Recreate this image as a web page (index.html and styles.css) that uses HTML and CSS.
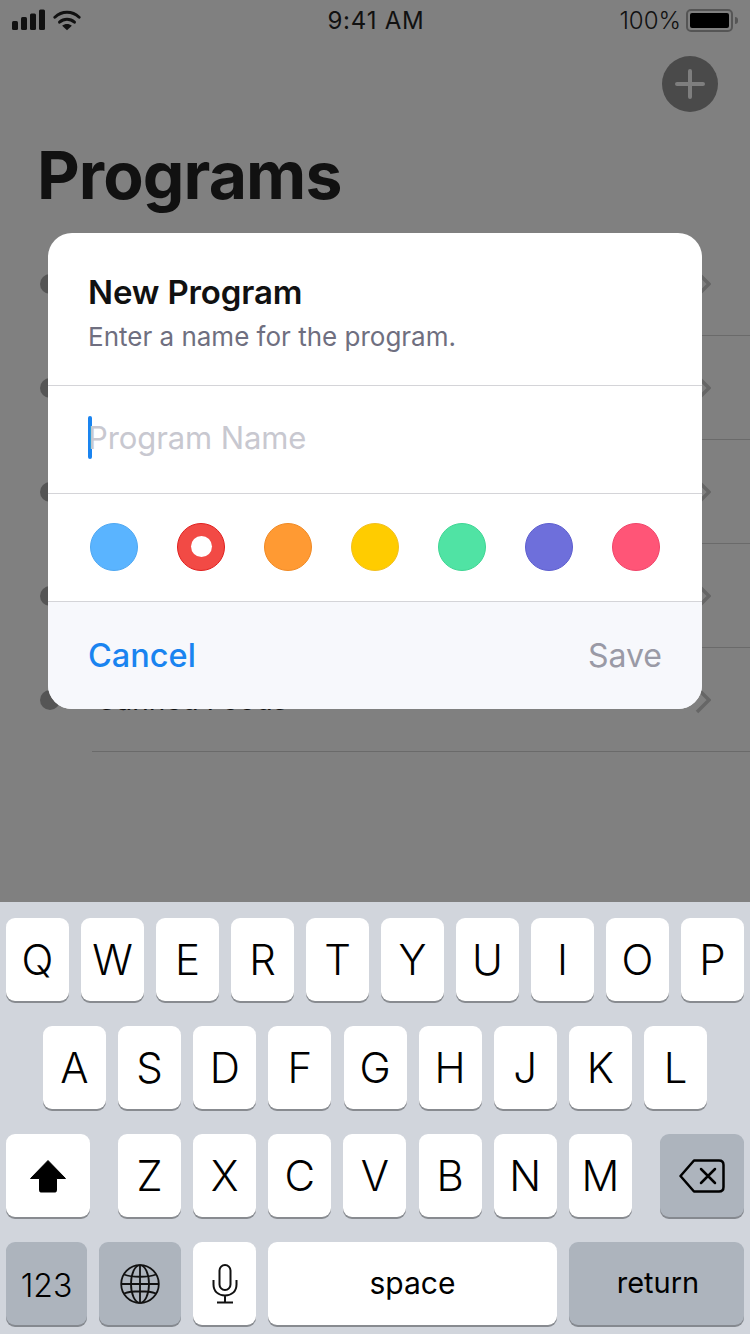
FILE: index.html
```html
<!DOCTYPE html>
<html lang="en">
<head>
<meta charset="utf-8">
<title>Programs</title>
<link rel="stylesheet" href="styles.css">
</head>
<body>
<div class="phone">
  <div class="status">
    <div class="status-left">
      <svg class="signal" width="34" height="22" viewBox="0 0 34 22"><rect x="0" y="12" width="6" height="9" rx="1.5"/><rect x="9" y="8" width="6" height="13" rx="1.5"/><rect x="18" y="4.500" width="6" height="16.500" rx="1.500"/><rect x="27" y="0.500" width="6" height="20.500" rx="1.500"/></svg>
      <svg class="wifi" width="28" height="21" viewBox="0 0 30 22"><path d="M2 7.500C9.500 .5 20.500 .5 28 7.500" fill="none" stroke="#111" stroke-width="3.200" stroke-linecap="round"/><path d="M7 12.800C11.700 8.600 18.300 8.600 23 12.800" fill="none" stroke="#111" stroke-width="3.200" stroke-linecap="round"/><path d="M15 21.500L9.800 16.600C12.800 14.200 17.200 14.200 20.200 16.600Z" fill="#111"/></svg>
    </div>
    <div class="status-time">9:41 AM</div>
    <div class="status-right">
      <span class="pct">100%</span>
      <span class="battery"><span class="battery-fill"></span></span>
      <span class="battery-nub"></span>
    </div>
  </div>
  <div class="topbar">
    <div class="add">
      <svg width="30" height="30" viewBox="0 0 30 30"><path d="M15 2V28M2 15H28" stroke="#7e7e7e" stroke-width="4" stroke-linecap="round"/></svg>
    </div>
  </div>
  <h1 class="title">Programs</h1>
  <div class="list">
    <div class="row"><span class="dot"></span><div class="row-body"><svg class="chev" width="16" height="28" viewBox="0 0 16 28"><path d="M2 2L14 14L2 26" fill="none" stroke="#666" stroke-width="3.500"/></svg></div></div>
    <div class="row"><span class="dot"></span><div class="row-body"><svg class="chev" width="16" height="28" viewBox="0 0 16 28"><path d="M2 2L14 14L2 26" fill="none" stroke="#666" stroke-width="3.500"/></svg></div></div>
    <div class="row"><span class="dot"></span><div class="row-body"><svg class="chev" width="16" height="28" viewBox="0 0 16 28"><path d="M2 2L14 14L2 26" fill="none" stroke="#666" stroke-width="3.500"/></svg></div></div>
    <div class="row"><span class="dot"></span><div class="row-body"><svg class="chev" width="16" height="28" viewBox="0 0 16 28"><path d="M2 2L14 14L2 26" fill="none" stroke="#666" stroke-width="3.500"/></svg></div></div>
    <div class="row"><span class="dot"></span><div class="row-body"><span class="row-label">Canned Foods</span><svg class="chev" width="16" height="28" viewBox="0 0 16 28"><path d="M2 2L14 14L2 26" fill="none" stroke="#666" stroke-width="3.500"/></svg></div></div>
  </div>

  <div class="keyboard">
    <div class="kb-row">
      <div class="key">Q</div><div class="key">W</div><div class="key">E</div><div class="key">R</div><div class="key">T</div><div class="key">Y</div><div class="key">U</div><div class="key">I</div><div class="key">O</div><div class="key">P</div>
    </div>
    <div class="kb-row kb-row-2">
      <div class="key">A</div><div class="key">S</div><div class="key">D</div><div class="key">F</div><div class="key">G</div><div class="key">H</div><div class="key">J</div><div class="key">K</div><div class="key">L</div>
    </div>
    <div class="kb-row kb-row-3">
      <div class="key key-shift">
        <svg width="38" height="34" viewBox="0 0 38 34"><path d="M19 1.500L36.500 19.500H27.500V31.500C27.500 32.600 26.800 33 26 33H12C11.200 33 10.500 32.600 10.500 31.500V19.500H1.500Z" fill="#000" stroke="#000" stroke-linejoin="round"/></svg>
      </div>
      <div class="letters">
        <div class="key">Z</div><div class="key">X</div><div class="key">C</div><div class="key">V</div><div class="key">B</div><div class="key">N</div><div class="key">M</div>
      </div>
      <div class="key key-delete key-dark">
        <svg width="46" height="34" viewBox="0 0 46 34"><path d="M15 1.500H40C42.800 1.500 44.500 3.200 44.500 6V28C44.500 30.800 42.800 32.500 40 32.500H15L1.500 17Z" fill="none" stroke="#000" stroke-width="2.500" stroke-linejoin="round"/><path d="M22 10L36 24M36 10L22 24" stroke="#000" stroke-width="2.500" stroke-linecap="round"/></svg>
      </div>
    </div>
    <div class="kb-row">
      <div class="key key-dark key-123">123</div>
      <div class="key key-dark key-globe">
        <svg width="40" height="40" viewBox="0 0 40 40" fill="none" stroke="#111" stroke-width="1.800"><circle cx="20" cy="20" r="18.800"/><ellipse cx="20" cy="20" rx="9" ry="18.800"/><path d="M20 1.200V38.800M1.200 20H38.800M4 10.500C12 13.500 28 13.500 36 10.500M4 29.500C12 26.500 28 26.500 36 29.500"/></svg>
      </div>
      <div class="key">
        <svg width="26" height="40" viewBox="0 0 26 40" fill="none" stroke="#111" stroke-width="2"><rect x="7.500" y="1" width="11" height="25" rx="5.500"/><path d="M1.500 16V20.500C1.500 27.500 6.500 31.500 13 31.500C19.500 31.500 24.500 27.500 24.500 20.500V16M13 31.500V38.500M5 38.500H21"/></svg>
      </div>
      <div class="key key-space">space</div>
      <div class="key key-dark key-return">return</div>
    </div>
  </div>

  <div class="modal">
    <div class="modal-head">
      <div class="modal-title">New Program</div>
      <div class="modal-sub">Enter a name for the program.</div>
    </div>
    <div class="modal-input">
      <span class="caret"></span>
      <span class="placeholder">Program Name</span>
    </div>
    <div class="colors">
      <span class="swatch swatch-blue"></span>
      <span class="swatch swatch-red"><span class="swatch-hole"></span></span>
      <span class="swatch swatch-orange"></span>
      <span class="swatch swatch-yellow"></span>
      <span class="swatch swatch-green"></span>
      <span class="swatch swatch-purple"></span>
      <span class="swatch swatch-pink"></span>
    </div>
    <div class="modal-foot">
      <span class="cancel">Cancel</span>
      <span class="save">Save</span>
    </div>
  </div>
</div>
</body>
</html>
```

FILE: styles.css
```css
* { box-sizing: border-box; }
html, body { margin: 0; padding: 0; }
body { width: 750px; height: 1334px; overflow: hidden; font-family: Inter, "Liberation Sans", sans-serif; }

.phone { position: relative; width: 750px; height: 1334px; background: #808080; display: flex; flex-direction: column; color: #111; }

.status { height: 40px; display: flex; align-items: center; justify-content: space-between; padding: 0 12px; flex: none; }
.status-left { flex: 1; display: flex; align-items: center; gap: 7px; }
.signal { fill: #111; }
.status-time { font-size: 24px; letter-spacing: 0.8px; line-height: 40px; color: #111; padding: 1px 0 0 2px; }
.status-right { flex: 1; display: flex; align-items: center; justify-content: flex-end; }
.pct { font-size: 24px; font-weight: 300; margin-right: 5px; line-height: 40px; padding-top: 1px; }
.battery { width: 47px; height: 23px; border: 2px solid #555; border-radius: 5px; padding: 2px; display: block; }
.battery-fill { display: block; width: 100%; height: 100%; background: #000; border-radius: 2px; }
.battery-nub { width: 3px; height: 7px; margin-left: 2px; background: #555; border-radius: 0 3px 3px 0; }

.topbar { height: 72px; flex: none; display: flex; justify-content: flex-end; align-items: flex-start; padding: 16px 32px 0 0; }
.add { width: 56px; height: 56px; border-radius: 50%; background: #4a4a4a; display: flex; align-items: center; justify-content: center; }

.title { margin: 0; padding-left: 37px; font-size: 66px; line-height: 72px; font-weight: 700; letter-spacing: -0.9px; color: #111; height: 120px; flex: none; padding-top: 27px; }

.list { flex: none; }
.row { height: 104px; display: flex; align-items: stretch; padding-left: 40px; gap: 32px; }
.dot { width: 20px; height: 20px; border-radius: 50%; background: #555; align-self: center; flex: none; }
.row-body { flex: 1; display: flex; align-items: center; justify-content: space-between; border-bottom: 1px solid #6a6a6a; padding-right: 39px; }
.row-label { font-size: 28px; color: #111; padding-left: 4px; }
.chev { margin-left: auto; }

.keyboard { margin-top: auto; height: 432px; flex: none; background: #d1d5dc; padding: 16px 6px 8px; display: flex; flex-direction: column; gap: 25px; }
.kb-row { display: flex; gap: 12px; }
.kb-row-2 { padding-left: 37px; gap: 12.125px; }
.kb-row-3 { gap: 28px; }
.letters { display: flex; gap: 12.17px; }
.key { width: 63px; height: 83px; flex: none; background: #fff; border-radius: 9px; box-shadow: 0 2px 0 #888b90; display: flex; align-items: center; justify-content: center; font-size: 42px; font-weight: 300; color: #000; }
.key-dark { background: #adb4bd; box-shadow: 0 2px 0 #85898f; }
.key-shift, .key-delete { width: 84px; }
.key-delete { margin-left: auto; }
.key-123 { width: 81px; font-size: 32px; padding-top: 3px; }
.key-globe { width: 82px; }
.key-space { width: 289px; font-size: 30px; font-weight: 400; padding-bottom: 2px; }
.key-return { width: 175px; font-size: 29px; font-weight: 400; padding: 0 0 2px 3px; }

.modal { position: absolute; left: 48px; top: 233px; width: 654px; height: 476px; border-radius: 24px; background: #fff; overflow: hidden; display: flex; flex-direction: column; }
.modal-head { height: 153px; padding: 39px 40px 0; border-bottom: 1px solid #d4d4d8; flex: none; }
.modal-title { font-size: 33px; line-height: 40px; font-weight: 600; color: #111; letter-spacing: -0.15px; }
.modal-sub { font-size: 26px; line-height: 34px; margin-top: 8px; color: #6f6f80; }
.modal-input { height: 108px; display: flex; align-items: center; padding: 0 0 5px 40px; border-bottom: 1px solid #d4d4d8; flex: none; }
.caret { width: 4px; height: 43px; border-radius: 2px; background: #1a84f0; flex: none; margin-right: -4px; }
.placeholder { font-size: 31px; letter-spacing: -0.1px; color: #c8c8d0; }
.colors { height: 108px; display: flex; align-items: center; justify-content: space-between; padding: 0 42px 2px; border-bottom: 1px solid #d4d4d8; flex: none; }
.swatch { width: 48px; height: 48px; border-radius: 50%; display: flex; align-items: center; justify-content: center; border: 1px solid; flex: none; }
.swatch-blue { background: #5ab4ff; border-color: #4fa8f2; }
.swatch-red { background: #f24a45; border-color: #e0201f; }
.swatch-hole { width: 21px; height: 21px; border-radius: 50%; background: #fff; }
.swatch-orange { background: #ff9a33; border-color: #f08a25; }
.swatch-yellow { background: #ffcc00; border-color: #f2c020; }
.swatch-green { background: #50e3a4; border-color: #3fd694; }
.swatch-purple { background: #6e6fdb; border-color: #5d5ecf; }
.swatch-pink { background: #ff5577; border-color: #f0456a; }
.modal-foot { flex: 1; background: #f7f8fc; display: flex; align-items: center; justify-content: space-between; padding: 0 40px; }
.cancel { font-size: 32.5px; font-weight: 500; color: #1a84f0; }
.save { font-size: 32px; color: #9a9aa6; }
```
